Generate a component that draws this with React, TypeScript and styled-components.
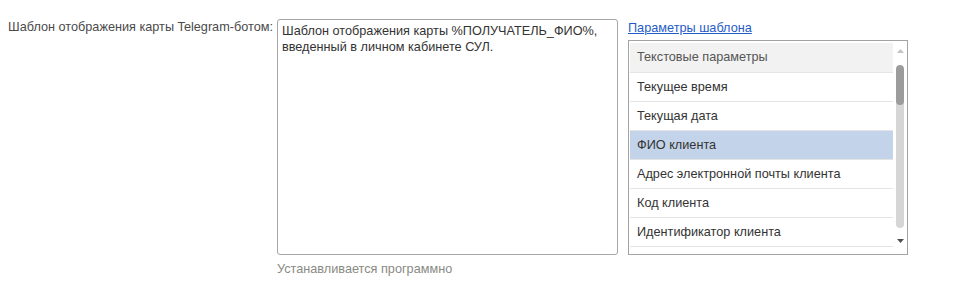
import React from "react";
import styled, { createGlobalStyle } from "styled-components";

const GlobalStyle = createGlobalStyle`
  html, body {
    margin: 0;
    padding: 0;
    background: #ffffff;
  }

  body {
    font-family: "Liberation Sans", Arial, sans-serif;
    font-size: 12.7px;
    color: #333333;
  }
`;

const params = [
  { id: "group", title: "Текстовые параметры", group: true },
  { id: "time", title: "Текущее время" },
  { id: "date", title: "Текущая дата" },
  { id: "fio", title: "ФИО клиента" },
  { id: "email", title: "Адрес электронной почты клиента" },
  { id: "code", title: "Код клиента" },
  { id: "uid", title: "Идентификатор клиента" },
];

const TEMPLATE_TEXT =
  "Шаблон отображения карты %ПОЛУЧАТЕЛЬ_ФИО%, введенный в личном кабинете СУЛ.";

export default function App() {
  const selected = "fio";

  return (
    <>
      <GlobalStyle />
      <FormRow>
        <Label htmlFor="tg-template">
          Шаблон отображения карты Telegram-ботом:
        </Label>

        <FieldColumn>
          <TemplateArea id="tg-template" readOnly value={TEMPLATE_TEXT} />
          <Hint>Устанавливается программно</Hint>
        </FieldColumn>

        <ParamsColumn>
          <ParamsLink href="#">Параметры шаблона</ParamsLink>
          <ListBox>
            <ItemList>
              {params.map((p) => (
                <Item key={p.id} group={p.group} active={p.id === selected}>
                  {p.title}
                </Item>
              ))}
            </ItemList>
            <ScrollBar>
              <svg width="7" height="4" viewBox="0 0 7 4">
                <path d="M0 4 L3.5 0 L7 4 Z" fill="#c2c2c2" />
              </svg>
              <Rail>
                <Thumb />
              </Rail>
              <svg width="7" height="4" viewBox="0 0 7 4">
                <path d="M0 0 L7 0 L3.5 4 Z" fill="#505050" />
              </svg>
            </ScrollBar>
          </ListBox>
        </ParamsColumn>
      </FormRow>
    </>
  );
}

const FormRow = styled.div`
  display: flex;
  align-items: flex-start;
  padding: 19px 0 0 8px;
`;

const Label = styled.label`
  width: 261px;
  margin-right: 8px;
  line-height: 16px;
  color: #4a4a4a;
  white-space: nowrap;
`;

const FieldColumn = styled.div`
  display: flex;
  flex-direction: column;
  margin-right: 10px;
`;

const TemplateArea = styled.textarea`
  box-sizing: border-box;
  width: 341px;
  height: 236px;
  margin: 0;
  padding: 3px 4px;
  border: 1px solid #a6a6a6;
  border-radius: 3px;
  font-family: "Liberation Sans", Arial, sans-serif;
  font-size: 12.7px;
  line-height: 16px;
  color: #333333;
  resize: none;
  outline: none;
  overflow: hidden;
`;

const Hint = styled.div`
  margin-top: 6px;
  line-height: 16px;
  color: #8a8a84;
`;

const ParamsColumn = styled.div`
  display: flex;
  flex-direction: column;
  padding-top: 1px;
`;

const ParamsLink = styled.a`
  align-self: flex-start;
  line-height: 16px;
  color: #1f5cc7;
  text-decoration: underline;
  margin-bottom: 4px;
`;

const ListBox = styled.div`
  box-sizing: border-box;
  display: flex;
  width: 280px;
  height: 215px;
  border: 1px solid #a3a3a3;
  overflow: hidden;
`;

const ItemList = styled.div`
  flex: 1;
  min-width: 0;
  padding: 2px 0 0 1px;
  overflow: hidden;
`;

const Item = styled.div<{ group?: boolean; active?: boolean }>`
  height: ${(p) => (p.group ? 29 : 28)}px;
  line-height: ${(p) => (p.group ? 29 : 28)}px;
  padding-left: 7px;
  border-bottom: 1px solid #e4e4e4;
  white-space: nowrap;
  color: ${(p) => (p.group ? "#555555" : "#333333")};
  background: ${(p) =>
    p.active ? "#c3d3ea" : p.group ? "#f2f2f2" : "#ffffff"};
`;

const ScrollBar = styled.div`
  width: 14px;
  display: flex;
  flex-direction: column;
  align-items: center;
  padding: 8px 0 11px;

  svg {
    flex: none;
    display: block;
  }
`;

const Rail = styled.div`
  flex: 1;
  width: 8px;
  margin: 12px 0 11px;
  border-radius: 4px;
  background: #d6d6d6;
  overflow: hidden;
`;

const Thumb = styled.div`
  height: 40px;
  border-radius: 4px;
  background: #9c9c9c;
`;
